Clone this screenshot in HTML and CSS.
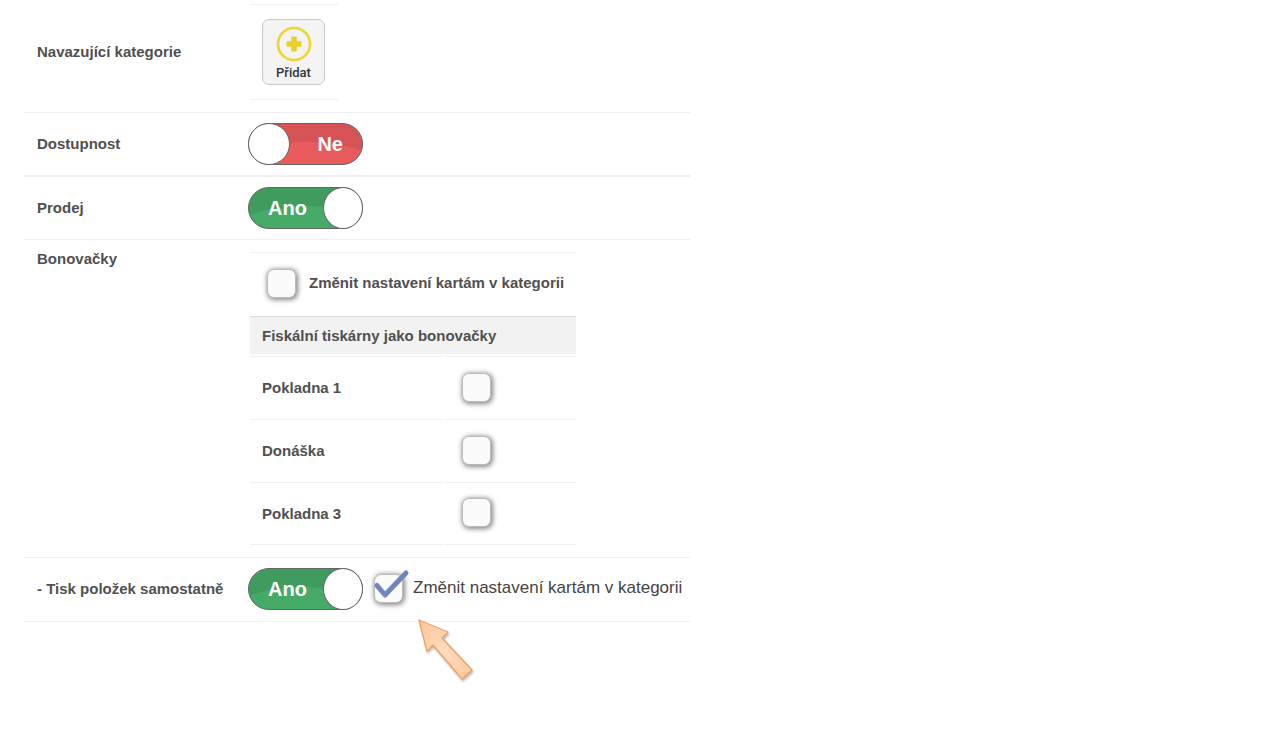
FILE: index.html
```html
<!DOCTYPE html>
<html lang="cs">
<head>
  <meta charset="UTF-8" />
  <title>Nastavení kategorie</title>
  <link rel="stylesheet" href="styles.css">
</head>
<body>
  <form class="settings">
    <div class="row row-add">
      <span class="name">Navazující kategorie</span>
      <div class="value">
        <div class="add-box">
          <button type="button" class="add-btn">
            <svg width="36" height="36" viewBox="0 0 36 36" aria-hidden="true">
              <circle cx="18" cy="18" r="16" fill="none" stroke="#edd532" stroke-width="2.6" />
              <path d="M15.3 10.5h5.4v4.8h4.8v5.4h-4.8v4.8h-5.4v-4.8h-4.8v-5.4h4.8z" fill="#e9cf2c" />
            </svg>
            Přidat
          </button>
        </div>
      </div>
    </div>

    <div class="row row-thick">
      <label class="name" for="dostupnost">Dostupnost</label>
      <div class="value">
        <label class="toggle">
          <input type="checkbox" id="dostupnost">
          <span class="off">Ne</span>
          <span class="on">Ano</span>
        </label>
      </div>
    </div>

    <div class="row">
      <label class="name" for="prodej">Prodej</label>
      <div class="value">
        <label class="toggle">
          <input type="checkbox" id="prodej" checked>
          <span class="off">Ne</span>
          <span class="on">Ano</span>
        </label>
      </div>
    </div>

    <div class="row row-printers">
      <span class="name">Bonovačky</span>
      <div class="value">
        <table class="printers">
          <tr class="change">
            <td colspan="2">
              <div class="check-line">
                <input type="checkbox" class="check" id="zmenit-bonovacky">
                <label for="zmenit-bonovacky">Změnit nastavení kartám v kategorii</label>
              </div>
            </td>
          </tr>
          <tr>
            <th colspan="2">Fiskální tiskárny jako bonovačky</th>
          </tr>
          <tr>
            <td class="printer"><label for="p1">Pokladna 1</label></td>
            <td><input type="checkbox" class="check" id="p1"></td>
          </tr>
          <tr>
            <td class="printer"><label for="p2">Donáška</label></td>
            <td><input type="checkbox" class="check" id="p2"></td>
          </tr>
          <tr>
            <td class="printer"><label for="p3">Pokladna 3</label></td>
            <td><input type="checkbox" class="check" id="p3"></td>
          </tr>
        </table>
      </div>
    </div>

    <div class="row row-print">
      <label class="name" for="tisk">- Tisk položek samostatně</label>
      <div class="value">
        <label class="toggle">
          <input type="checkbox" id="tisk" checked>
          <span class="off">Ne</span>
          <span class="on">Ano</span>
        </label>
        <span class="check-wrap">
          <input type="checkbox" class="check" id="zmenit-tisk" checked>
          <svg class="tick" width="40" height="36" viewBox="0 0 40 36" aria-hidden="true">
            <path d="M6 17.5L14 27L35 5" fill="none" stroke="#7085bb" stroke-width="5" stroke-linecap="round" stroke-linejoin="round" />
          </svg>
        </span>
        <label class="change-label" for="zmenit-tisk">Změnit nastavení kartám v kategorii</label>
        <!-- šipka ukazující na zaškrtnutí -->
        <svg class="arrow" width="62" height="70" viewBox="0 0 62 70" aria-hidden="true">
          <defs>
            <linearGradient id="peach" x1="0" y1="0" x2="1" y2="1">
              <stop offset="0" stop-color="#ffc899" />
              <stop offset="0.5" stop-color="#ffdabd" />
              <stop offset="1" stop-color="#ffc899" />
            </linearGradient>
          </defs>
          <path d="M4 4L33 16L27 22L57 54L47 63L18 29L12 35Z" fill="url(#peach)" stroke="#eea265" stroke-width="1.3" stroke-linejoin="round" />
        </svg>
      </div>
    </div>
  </form>
</body>
</html>
```

FILE: styles.css
```css
body {
  min-height: 100vh;
  margin: 0;
  background: #fff;
  color: #505050;
  font-family: "Liberation Sans", Arial, sans-serif;
  font-size: 15px;
  line-height: 18px;
}

.settings {
  max-width: 666px;
  margin: 0 24px;
}

.row {
  display: flex;
  align-items: center;
  padding: 10px 0;
  border-bottom: 1px solid #f0f0f0;
}

.row-thick {
  border-bottom-width: 2px;
}

.row-add {
  padding: 4px 0 12px;
}

.row-print {
  padding-bottom: 11px;
}

.row-printers {
  align-items: flex-start;
  padding: 12px 0;
}

.row-printers .name {
  margin-top: -2px;
}

.name {
  flex: 0 0 211px;
  padding-left: 13px;
  font-weight: bold;
}

.value {
  position: relative;
  display: flex;
  align-items: center;
  flex: 1;
}

/* tlačítko Přidat */
.add-box {
  margin-left: 2px;
  padding: 14px 13px 14px 12px;
  border-top: 1px solid #f0f0f0;
  border-bottom: 1px solid #f0f0f0;
}

.add-btn {
  display: flex;
  flex-direction: column;
  align-items: center;
  width: 63px;
  height: 66px;
  padding: 6px 0 0;
  border: 1px solid #c8c8c8;
  border-radius: 7px;
  background: #f4f4f4;
  color: #333;
  font: 500 13px/21px Roboto, sans-serif;
  cursor: pointer;
}

/* přepínač Ano / Ne */
.toggle {
  position: relative;
  box-sizing: border-box;
  width: 115px;
  height: 42px;
  color: #fff;
  font-size: 20px;
  font-weight: bold;
  line-height: 42px;
  cursor: pointer;
}

.toggle input {
  appearance: none;
  display: block;
  box-sizing: border-box;
  width: 115px;
  height: 42px;
  margin: 0;
  border: 1px solid #666;
  border-radius: 21px;
  background: radial-gradient(ellipse 70px 22px at 50% 100%, #e85b5d 98%, transparent), #d55355;
  cursor: pointer;
}

.toggle input:checked {
  background: radial-gradient(ellipse 70px 22px at 50% 100%, #44aa66 98%, transparent), #3f9c5e;
}

/* kolečko */
.toggle::after {
  content: "";
  position: absolute;
  top: 0;
  left: 0;
  box-sizing: border-box;
  width: 42px;
  height: 42px;
  border: 1px solid #666;
  border-radius: 50%;
  background: #fff;
}

.toggle:has(input:checked)::after {
  left: auto;
  right: 0;
  width: 40px;
}

.toggle span {
  position: absolute;
  top: 0;
}

.toggle .off {
  right: 20px;
}

.toggle .on {
  display: none;
  left: 20px;
}

.toggle input:checked ~ .on {
  display: block;
}

.toggle input:checked ~ .off {
  display: none;
}

/* zaškrtávací políčko */
.check {
  appearance: none;
  display: block;
  box-sizing: border-box;
  width: 29px;
  height: 29px;
  margin: 0 0 2px;
  border: 1px solid #bbb;
  border-radius: 7px;
  background: #fbfbfb;
  box-shadow: 1px 1px 5px 1px #888;
  cursor: pointer;
}

.check-line {
  display: flex;
  align-items: center;
  gap: 13px;
  padding-bottom: 1px;
  white-space: nowrap;
}

.check-line label {
  padding-bottom: 2px;
}

.check-wrap {
  position: relative;
  margin-left: 11px;
}

.tick {
  position: absolute;
  top: -6px;
  left: -3px;
  pointer-events: none;
}

.change-label {
  margin-left: 10px;
  padding-bottom: 2px;
  color: #444;
  font-size: 17px;
  white-space: nowrap;
}

.arrow {
  position: absolute;
  top: 48px;
  left: 167px;
  filter: drop-shadow(1px 2px 1px #bbb);
  pointer-events: none;
}

/* tabulka tiskáren */
.printers {
  width: 330px;
  border-spacing: 2px 0;
  font-weight: bold;
}

.printers td {
  box-sizing: border-box;
  height: 63px;
  padding: 0 18px;
  border-top: 1px solid #f0f0f0;
}

.printers .change td {
  height: 64px;
  padding: 0 0 0 17px;
}

.printers th {
  height: 37px;
  padding: 0 12px;
  border-top: 1px solid #ddd;
  border-bottom: 2px solid #fff;
  background: #f2f2f2;
  text-align: left;
}

.printers .printer {
  width: 192px;
  padding: 0 12px;
}

.printers tr:last-child td {
  border-bottom: 1px solid #f0f0f0;
}
```
